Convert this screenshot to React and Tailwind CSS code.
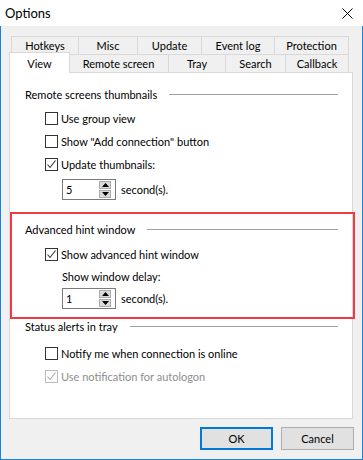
import React from "react";

const font = { fontFamily: 'Lato, "Noto Sans", sans-serif' };

function CheckBox({ label, checked, disabled }) {
  return (
    <div className="h-[23px] flex items-center ml-[35px]">
      <div
        className={`w-[13px] h-[13px] border bg-white flex items-center justify-center ${
          disabled ? "border-[#bcbcbc]" : "border-[#333333]"
        }`}
      >
        {checked && (
          <svg width="11" height="11" viewBox="0 0 11 11">
            <polyline
              points="1.5,5.5 4,8.5 9.5,1.5"
              fill="none"
              stroke={disabled ? "#a8a8a8" : "#333333"}
              strokeWidth="1.1"
            />
          </svg>
        )}
      </div>
      <span
        className={`ml-[3px] text-[11px] leading-none ${
          disabled ? "text-[#8d8d8d]" : "text-black"
        }`}
      >
        {label}
      </span>
    </div>
  );
}

function SectionHeader({ title, className = "" }) {
  return (
    <div className={`h-[18px] flex items-center pl-[15px] pr-[14px] ${className}`}>
      <span className="text-[11px] leading-none text-black whitespace-nowrap">
        {title}
      </span>
      <div className="flex-1 h-px bg-[#a0a0a0] ml-[12px]" />
    </div>
  );
}

function SpinBox({ value, className = "" }) {
  return (
    <div className={`flex items-center ml-[52px] ${className}`}>
      <div className="w-[54px] h-[21px] border border-[#7a7a7a] bg-white flex items-center pl-[3px] pr-[4px]">
        <span className="flex-1 text-[11px] leading-none text-black">{value}</span>
        <div className="flex flex-col gap-px">
          <div className="w-[12px] h-[8px] bg-[#dadada] border border-[#acacac] flex items-center justify-center">
            <svg width="7" height="4" viewBox="0 0 7 4">
              <polygon points="0,4 7,4 3.5,0" fill="#000" />
            </svg>
          </div>
          <div className="w-[12px] h-[8px] bg-[#dadada] border border-[#acacac] flex items-center justify-center">
            <svg width="7" height="4" viewBox="0 0 7 4">
              <polygon points="0,0 7,0 3.5,4" fill="#000" />
            </svg>
          </div>
        </div>
      </div>
      <span className="ml-[5px] text-[11px] leading-none text-black">second(s).</span>
    </div>
  );
}

function Tab({ label, w, last, selected }) {
  if (selected) {
    return (
      <div className="relative shrink-0" style={{ width: w }}>
        <div className="absolute -left-[2px] -right-[2px] -top-[2px] -bottom-[1px] z-10 bg-white border-x border-t border-[#d9d9d9] flex items-start justify-center pt-[3px]">
          <span className="text-[11px] leading-[16px] text-black">{label}</span>
        </div>
      </div>
    );
  }
  return (
    <div
      className={`shrink-0 h-full bg-[#f0f0f0] border-l border-t border-[#d9d9d9] flex items-center justify-center ${
        last ? "border-r" : ""
      }`}
      style={{ width: w }}
    >
      <span className="text-[11px] leading-none text-black">{label}</span>
    </div>
  );
}

export default function App() {
  const row1 = [
    ["Hotkeys", 67],
    ["Misc", 59],
    ["Update", 64],
    ["Event log", 73],
    ["Protection", 75],
  ];
  const row2 = [
    ["View", 57],
    ["Remote screen", 100],
    ["Tray", 57],
    ["Search", 60],
    ["Callback", 64],
  ];

  return (
    <div className="w-[363px] h-[460px] bg-white flex flex-col relative" style={font}>
      {/* Title bar */}
      <div className="h-[26px] flex items-center justify-between pl-[5px] pr-[10px] shrink-0">
        <span className="text-[13px] leading-none text-black">Options</span>
        <svg width="11" height="11" viewBox="0 0 11 11">
          <line x1="0.5" y1="0.5" x2="10.5" y2="10.5" stroke="#000" strokeWidth="1" />
          <line x1="10.5" y1="0.5" x2="0.5" y2="10.5" stroke="#000" strokeWidth="1" />
        </svg>
      </div>

      {/* Body */}
      <div className="flex-1 bg-[#f0f0f0] border-x border-b border-[#1883d7] flex flex-col px-[8px] pt-[10px]">
        <div className="flex h-[18px] ml-[2px]">
          {row1.map(([l, w], i) => (
            <Tab key={l} label={l} w={w} last={i === row1.length - 1} />
          ))}
        </div>
        <div className="flex h-[18px] ml-[2px]">
          {row2.map(([l, w], i) => (
            <Tab key={l} label={l} w={w} last={i === row2.length - 1} selected={i === 0} />
          ))}
        </div>

        {/* Panel */}
        <div className="w-[344px] h-[347px] border border-[#d9d9d9] bg-white flex flex-col shrink-0">
          <SectionHeader title="Remote screens thumbnails" className="mt-[12px]" />
          <div className="mt-[4px]">
            <CheckBox label="Use group view" />
            <CheckBox label={'Show "Add connection" button'} />
            <CheckBox label="Update thumbnails:" checked />
          </div>
          <SpinBox value="5" className="mt-[3px]" />

          <SectionHeader title="Advanced hint window" className="mt-[20px]" />
          <div className="mt-[5px]">
            <CheckBox label="Show advanced hint window" checked />
          </div>
          <div className="h-[18px] flex items-center ml-[52px] mt-[1px]">
            <span className="text-[11px] leading-none text-black">Show window delay:</span>
          </div>
          <SpinBox value="1" className="mt-[3px]" />

          <SectionHeader title="Status alerts in tray" className="mt-[8px]" />
          <div className="mt-[7px]">
            <CheckBox label="Notify me when connection is online" />
            <CheckBox label="Use notification for autologon" checked disabled />
          </div>
        </div>

        {/* Buttons */}
        <div className="flex justify-end gap-[8px] mt-[8px]">
          <button className="w-[73px] h-[23px] bg-[#e1e1e1] border-2 border-[#0078d7] text-[11px] leading-none text-black">
            OK
          </button>
          <button className="w-[73px] h-[23px] bg-[#e1e1e1] border border-[#adadad] text-[11px] leading-none text-black">
            Cancel
          </button>
        </div>
      </div>

      {/* Annotation highlight */}
      <div className="absolute left-[10px] top-[212px] w-[345px] h-[107px] border-2 border-[#ee3b43] pointer-events-none" />
    </div>
  );
}
